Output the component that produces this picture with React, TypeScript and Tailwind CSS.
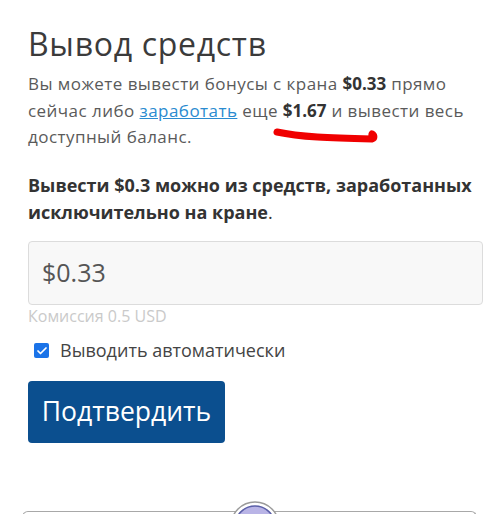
import { Check } from "lucide-react";

export default function App() {
  return (
    <div className="relative h-[514px] w-[499px] overflow-hidden bg-white font-['Open_Sans',sans-serif] text-[#555]">
      <div className="pl-[28px] pr-[16px] pt-[22px]">
        <h1 className="text-[32px] leading-[44px] tracking-[0.7px] text-[#3b3b3b]">
          Вывод средств
        </h1>
        <p className="mt-[5px] text-[17px] leading-[26.5px] tracking-[0.45px] text-[#5a5a5a]">
          Вы можете вывести бонусы с крана{" "}
          <b className="font-bold tracking-normal text-[#333]">$0.33</b> прямо
          сейчас либо{" "}
          <a className="text-[#2a8bd0] underline" href="#">
            заработать
          </a>{" "}
          еще <b className="font-bold tracking-normal text-[#333]">$1.67</b> и
          вывести весь доступный баланс.
        </p>
        <p className="mt-[21px] text-[18px] font-bold leading-[27px] text-[#333]">
          Вывести $0.3 можно из средств, заработанных исключительно на кране
          <span className="font-normal">.</span>
        </p>
        <div className="mt-[15px] flex h-[64px] items-center rounded-[4px] border border-[#dcdcdc] bg-[#f8f8f8] px-[13px] text-[25px] text-[#555]">
          $0.33
        </div>
        <div className="mt-[1px] text-[16px] leading-[20px] text-[#cacaca]">
          Комиссия 0.5 USD
        </div>
        <label className="mt-[13px] flex h-[24px] items-center gap-[11px] pl-[6px] text-[18px] text-[#444]">
          <span className="flex h-[15px] w-[15px] items-center justify-center rounded-[2px] bg-[#1a73e8]">
            <Check className="h-[12px] w-[12px] text-white" strokeWidth={3.5} />
          </span>
          Выводить автоматически
        </label>
        <button className="mt-[18px] flex h-[62px] w-[197px] items-center justify-center rounded-[4px] bg-[#0b4f8f] text-[26.5px] text-white">
          Подтвердить
        </button>
      </div>

      <div className="mx-[22px] mt-[68px] h-[20px] rounded-t-[6px] border border-b-0 border-[#a8a8a8]" />

      {/* red hand-drawn mark + bottom badge */}
      <svg className="absolute left-0 top-0" width="499" height="514">
        <path
          d="M277 132 C 300 137, 330 138, 372 139 C 375 138, 374 135, 372 134"
          fill="none"
          stroke="#f00000"
          strokeWidth="7"
          strokeLinecap="round"
        />
        <circle cx="255" cy="526" r="24" fill="#fff" stroke="#9a9a9a" strokeWidth="1.5" />
        <circle cx="255" cy="526" r="20" fill="#b9b4e6" stroke="#5b5fa8" strokeWidth="1.5" />
      </svg>
    </div>
  );
}
